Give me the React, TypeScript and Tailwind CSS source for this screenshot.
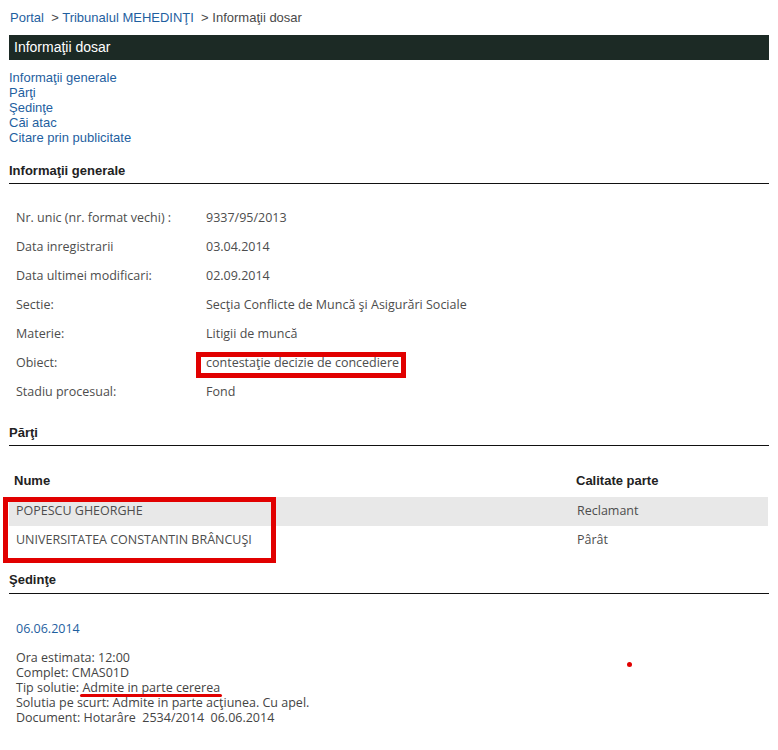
import React from "react";

const RED = "bg-[#e10000]";

function Heading({ children, className = "" }: { children: React.ReactNode; className?: string }) {
  return (
    <div
      className={`border-b border-[#111] font-['Liberation_Sans',Arial,sans-serif] text-[13px] font-bold leading-[16px] text-[#222] ${className}`}
    >
      {children}
    </div>
  );
}

const rows: [string, string][] = [
  ["Nr. unic (nr. format vechi) :", "9337/95/2013"],
  ["Data inregistrarii", "03.04.2014"],
  ["Data ultimei modificari:", "02.09.2014"],
  ["Sectie:", "Secţia Conflicte de Muncă şi Asigurări Sociale"],
  ["Materie:", "Litigii de muncă"],
  ["Obiect:", "contestaţie decizie de concediere"],
  ["Stadiu procesual:", "Fond"],
];

export default function App() {
  return (
    <div className="min-h-[750px] bg-white">
      <div className="w-[769px] pl-[9px] pt-[10px]">
        {/* breadcrumb */}
        <div className="whitespace-pre pl-[1px] font-['Liberation_Sans',Arial,sans-serif] text-[13px] leading-[15px] text-[#4a4a4a]">
          <span className="text-[#1f5f9f]">Portal</span>
          {"\u00a0 > "}
          <span className="text-[#1f5f9f]">Tribunalul MEHEDINŢI</span>
          {"\u00a0 > Informaţii dosar"}
        </div>

        {/* title bar */}
        <div className="mt-[10px] h-[25px] bg-[#1c2a25] pl-[5px] font-['Liberation_Sans',Arial,sans-serif] text-[14px] leading-[25px] text-white">
          Informaţii dosar
        </div>

        {/* links */}
        <div className="mt-[10px] flex flex-col font-['Liberation_Sans',Arial,sans-serif] text-[13px] leading-[15px] text-[#1f5f9f]">
          <span>Informaţii generale</span>
          <span>Părţi</span>
          <span>Şedinţe</span>
          <span>Căi atac</span>
          <span>Citare prin publicitate</span>
        </div>

        <Heading className="mt-[18px] pb-[4px]">Informaţii generale</Heading>

        <div className="mt-[20px] font-['Open_Sans',sans-serif] text-[12.5px] text-[#4d4d4d]">
          {rows.map(([label, value], i) => (
            <div key={i} className="flex h-[29px] items-center">
              <div className="w-[197px] shrink-0 pl-[7px]">{label}</div>
              <div className="relative flex h-full flex-1 items-center">
                {label === "Obiect:" && (
                  <div className="absolute left-[-10px] top-[3px] h-[26px] w-[210px] border-[5px] border-[#e10000]" />
                )}
                <span className="relative">{value}</span>
              </div>
            </div>
          ))}
        </div>

        <Heading className="mt-[18px] pb-[4px]">Părţi</Heading>

        {/* parties table */}
        <div className="mt-[20px]">
          <div className="flex h-[31px] items-center pb-[1px] font-['Liberation_Sans',Arial,sans-serif] text-[13px] font-bold text-[#222]">
            <div className="w-[562px] pl-[5px]">Nume</div>
            <div className="pl-[5px]">Calitate parte</div>
          </div>
          <div className="relative font-['Open_Sans',sans-serif] text-[12.5px] text-[#4d4d4d]">
            <div className="flex h-[29px] w-[759px] items-center bg-[#e8e8e8]">
              <div className="w-[562px] pl-[7px]">POPESCU GHEORGHE</div>
              <div className="pl-[6px]">Reclamant</div>
            </div>
            <div className="flex h-[29px] items-center">
              <div className="w-[562px] pl-[7px]">UNIVERSITATEA CONSTANTIN BRÂNCUŞI</div>
              <div className="pl-[6px]">Pârât</div>
            </div>
            <div className="absolute left-[-6px] top-0 h-[66px] w-[273px] border-[5px] border-[#e10000]" />
          </div>
        </div>

        <Heading className="mt-[17px] pb-[5px]">Şedinţe</Heading>

        <div className="mt-[27px] pl-[7px] font-['Open_Sans',sans-serif] text-[12.5px] leading-[15px] text-[#1f5f9f]">
          06.06.2014
        </div>

        <div className="relative mt-[14px] flex flex-col whitespace-pre pl-[7px] font-['Open_Sans',sans-serif] text-[12.5px] leading-[15px] text-[#444]">
          <span>Ora estimata: 12:00</span>
          <span>Complet: CMAS01D</span>
          <span>
            {"Tip solutie: "}
            <span className="relative">
              Admite in parte cererea
              <span className={`absolute bottom-[-1px] left-[-2px] right-[-2px] h-[3px] rounded-full ${RED}`} />
            </span>
          </span>
          <span>Solutia pe scurt: Admite in parte acţiunea. Cu apel.</span>
          <span>{"Document: Hotarâre  2534/2014  06.06.2014"}</span>
          <span className={`absolute left-[618px] top-[12px] h-[5px] w-[5px] rounded-full ${RED}`} />
        </div>
      </div>
    </div>
  );
}
